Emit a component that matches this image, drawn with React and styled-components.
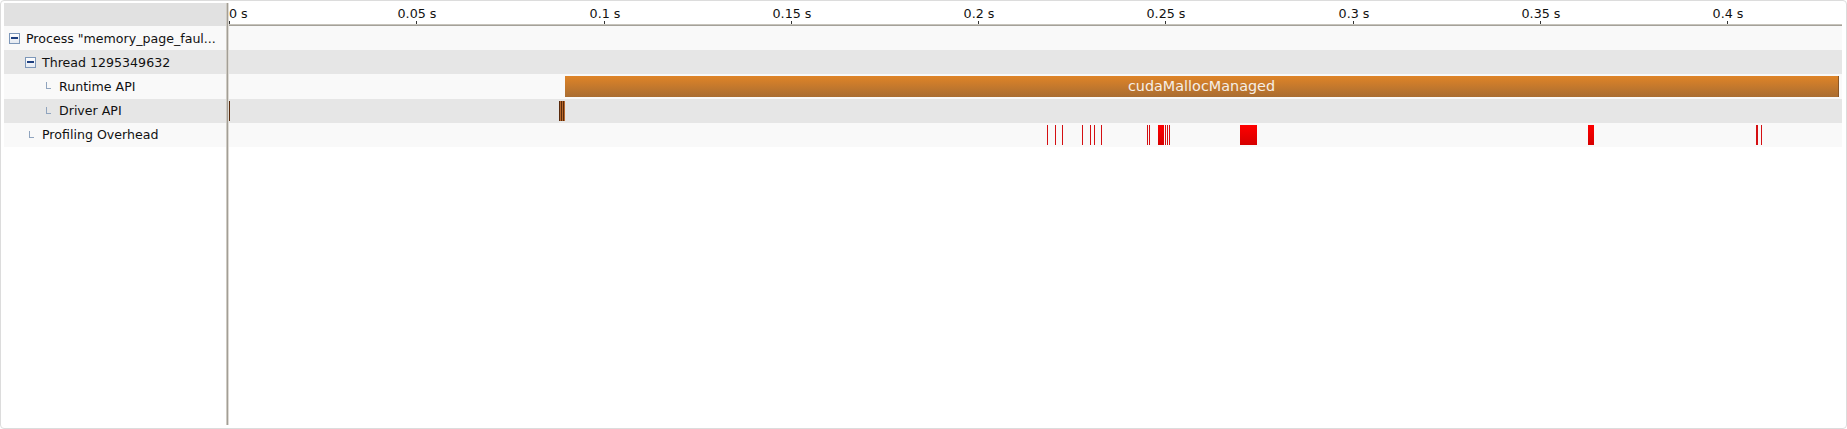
import React from 'react';
import styled, { createGlobalStyle } from 'styled-components';

// timeline scale: 0.05 s per 187.25 px
const PX_PER_MS = 3.745;

const TICKS = [0, 0.05, 0.1, 0.15, 0.2, 0.25, 0.3, 0.35, 0.4];

const ROWS = [
  { id: 'process', label: 'Process "memory_page_faul...', indent: 5, node: 'toggle', tone: 'light' },
  { id: 'thread', label: 'Thread 1295349632', indent: 21, node: 'toggle', tone: 'dark' },
  { id: 'runtime', label: 'Runtime API', indent: 42, node: 'leaf', tone: 'light' },
  { id: 'driver', label: 'Driver API', indent: 42, node: 'leaf', tone: 'dark' },
  { id: 'overhead', label: 'Profiling Overhead', indent: 25, node: 'leaf', tone: 'light' },
];

// start / duration in ms
const MARKS = {
  process: [],
  thread: [],
  runtime: [{ start: 89.7, dur: 340.1, kind: 'api', label: 'cudaMallocManaged' }],
  driver: [
    { start: 0, dur: 0.27, kind: 'driver' },
    { start: 88.12, dur: 0.53, kind: 'driver' },
    { start: 88.65, dur: 0.53, kind: 'driver' },
    { start: 89.19, dur: 0.53, kind: 'driver' },
  ],
  overhead: [
    { start: 218.4, dur: 0.27, kind: 'line' },
    { start: 220.6, dur: 0.27, kind: 'line' },
    { start: 222.4, dur: 0.27, kind: 'line' },
    { start: 227.8, dur: 0.27, kind: 'line' },
    { start: 229.9, dur: 0.27, kind: 'line' },
    { start: 231.0, dur: 0.27, kind: 'line' },
    { start: 232.8, dur: 0.27, kind: 'line' },
    { start: 245.1, dur: 0.27, kind: 'line' },
    { start: 245.7, dur: 0.27, kind: 'line' },
    { start: 248.1, dur: 1.6, kind: 'block' },
    { start: 249.9, dur: 0.27, kind: 'line' },
    { start: 250.5, dur: 0.27, kind: 'line' },
    { start: 251.0, dur: 0.27, kind: 'line' },
    { start: 270.0, dur: 4.54, kind: 'block' },
    { start: 362.9, dur: 1.6, kind: 'block' },
    { start: 407.7, dur: 0.53, kind: 'line' },
    { start: 409.1, dur: 0.27, kind: 'line' },
  ],
};

const GlobalStyle = createGlobalStyle`
  html, body {
    margin: 0;
    padding: 0;
    background: #ffffff;
  }
  body {
    font-family: "DejaVu Sans", "Liberation Sans", sans-serif;
    color: #111;
  }
`;

const Frame = styled.div`
  box-sizing: border-box;
  width: 1847px;
  height: 429px;
  border: 1px solid #dcdcdc;
  border-radius: 4px;
  padding: 2px 4px 3px 3px;
  background: #fff;
  display: flex;
`;

const TreePanel = styled.div`
  width: 222px;
  display: flex;
  flex-direction: column;
`;

const TreeHeader = styled.div`
  height: 23px;
  background: #e1e1e1;
`;

const Divider = styled.div`
  width: 3px;
  background: linear-gradient(to right, #cfcbc3 0 1px, #a29e96 1px 2px, #dedbd5 2px 3px);
`;

const TimelinePanel = styled.div`
  flex: 1;
  display: flex;
  flex-direction: column;
  min-width: 0;
`;

const Ruler = styled.div`
  position: relative;
  height: 21px;
  background: #fff;
  border-bottom: 1px solid #c6c3bb;
  box-shadow: 0 1px 0 #a4a199;
  margin-bottom: 1px;
`;

const TickLabel = styled.span`
  position: absolute;
  top: 4px;
  font-size: 12.7px;
  line-height: 14px;
  white-space: nowrap;
  color: #111;
  transform: ${(p) => (p.$first ? 'none' : 'translateX(-50%)')};
`;

const Tick = styled.span`
  position: absolute;
  bottom: 0;
  width: 1px;
  height: 3px;
  background: #333;
`;

const Row = styled.div`
  box-sizing: border-box;
  height: 24.2px;
  background: ${(p) => (p.$tone === 'dark' ? '#e6e6e6' : '#f9f9f9')};
`;

const TreeRow = styled(Row)`
  display: flex;
  align-items: center;
  padding-left: ${(p) => p.$indent}px;
  font-size: 12.6px;
  white-space: nowrap;
`;

const Toggle = styled.span`
  box-sizing: border-box;
  flex: none;
  width: 11px;
  height: 11px;
  margin-right: 6px;
  border: 1px solid #7d97b9;
  background: linear-gradient(#ffffff, #e4e9f1);
  display: flex;
  align-items: center;
  justify-content: center;

  &::after {
    content: '';
    width: 7px;
    height: 2px;
    background: #1e3f7f;
  }
`;

const Branch = styled.span`
  flex: none;
  width: 5px;
  height: 7px;
  margin-right: 8px;
  margin-top: -1px;
  border-left: 1px solid #90a4be;
  border-bottom: 1px solid #90a4be;
  box-sizing: border-box;
`;

const Label = styled.span``;

const Track = styled(Row)`
  position: relative;
`;

const Mark = styled.div`
  position: absolute;
  top: 2px;
  bottom: 2px;
  box-sizing: border-box;
  ${(p) =>
    p.$kind === 'api' &&
    `
    background: linear-gradient(#df8427, #a96d32);
    border-right: 1px solid #8c5624;
    display: flex;
    align-items: center;
    justify-content: center;
    color: #f6eee6;
    font-size: 14.4px;
    overflow: hidden;
    white-space: nowrap;
  `}
  ${(p) => p.$kind === 'driver' && `background: linear-gradient(to right, #582a0c 0 1px, #b8682c 1px);`}
  ${(p) => p.$kind === 'line' && `background: #d40f12;`}
  ${(p) => p.$kind === 'block' && `background: linear-gradient(#ff0000, #d60000);`}
`;

const Filler = styled.div`
  flex: 1;
  background: #fff;
`;

function TimelineRuler() {
  return (
    <Ruler>
      {TICKS.map((t, i) => {
        const x = Math.round(t * 1000 * PX_PER_MS);
        return (
          <React.Fragment key={t}>
            <TickLabel $first={i === 0} style={{ left: x + (i === 0 ? 0 : 1) }}>
              {t} s
            </TickLabel>
            <Tick style={{ left: x }} />
          </React.Fragment>
        );
      })}
    </Ruler>
  );
}

function TreeItem({ row }) {
  return (
    <TreeRow $tone={row.tone} $indent={row.indent}>
      {row.node === 'toggle' ? <Toggle /> : <Branch />}
      <Label>{row.label}</Label>
    </TreeRow>
  );
}

function TrackRow({ row }) {
  return (
    <Track $tone={row.tone}>
      {MARKS[row.id].map((m, i) => {
        const left = Math.round(m.start * PX_PER_MS);
        const width = Math.max(1, Math.round(m.dur * PX_PER_MS));
        return (
          <Mark key={i} $kind={m.kind} style={{ left, width }}>
            {m.label}
          </Mark>
        );
      })}
    </Track>
  );
}

export default function App() {
  return (
    <>
      <GlobalStyle />
      <Frame>
        <TreePanel>
          <TreeHeader />
          {ROWS.map((row) => (
            <TreeItem key={row.id} row={row} />
          ))}
          <Filler />
        </TreePanel>
        <Divider />
        <TimelinePanel>
          <TimelineRuler />
          {ROWS.map((row) => (
            <TrackRow key={row.id} row={row} />
          ))}
          <Filler />
        </TimelinePanel>
      </Frame>
    </>
  );
}
